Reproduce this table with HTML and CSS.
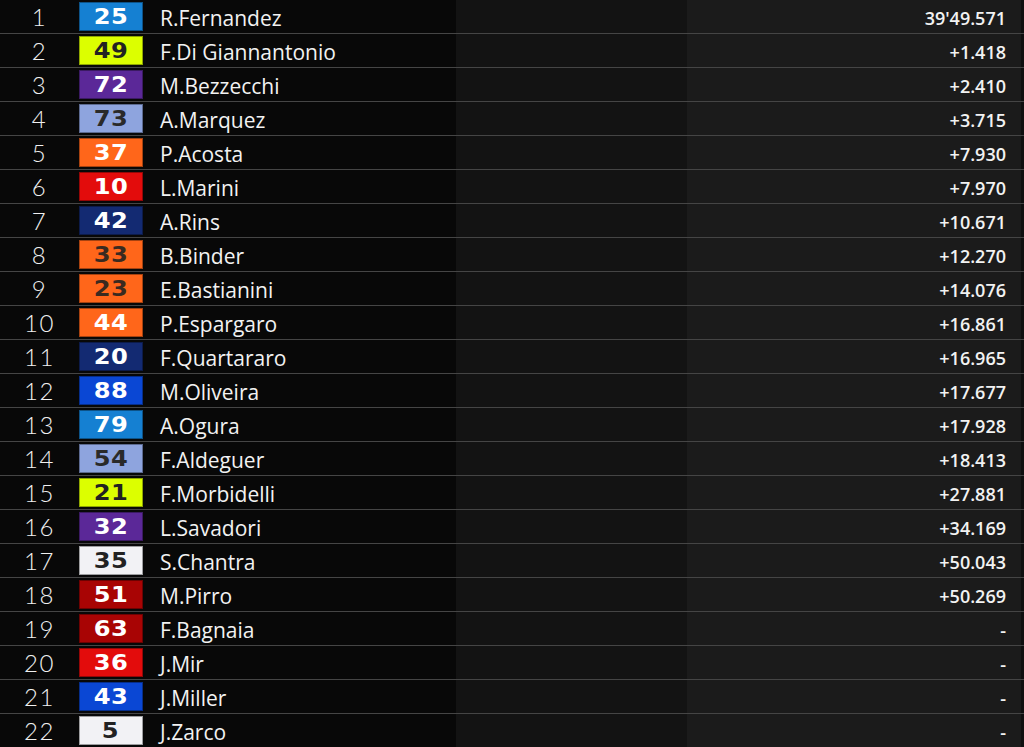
FILE: index.html
```html
<!DOCTYPE html>
<html>
<head>
<meta charset="utf-8">
<link rel="stylesheet" href="styles.css">
</head>
<body>
<div class="table">
  <div class="row"><span class="pos">1</span><span class="num c-trk"><b>25</b></span><span class="name">R.Fernandez</span><span class="time">39'49.571</span></div>
  <div class="row"><span class="pos">2</span><span class="num c-lime"><b>49</b></span><span class="name">F.Di Giannantonio</span><span class="time">+1.418</span></div>
  <div class="row"><span class="pos">3</span><span class="num c-purple"><b>72</b></span><span class="name">M.Bezzecchi</span><span class="time">+2.410</span></div>
  <div class="row"><span class="pos">4</span><span class="num c-light"><b>73</b></span><span class="name">A.Marquez</span><span class="time">+3.715</span></div>
  <div class="row"><span class="pos">5</span><span class="num c-orange"><b>37</b></span><span class="name">P.Acosta</span><span class="time">+7.930</span></div>
  <div class="row"><span class="pos">6</span><span class="num c-red"><b>10</b></span><span class="name">L.Marini</span><span class="time">+7.970</span></div>
  <div class="row"><span class="pos">7</span><span class="num c-navy"><b>42</b></span><span class="name">A.Rins</span><span class="time">+10.671</span></div>
  <div class="row"><span class="pos">8</span><span class="num c-orange dark"><b>33</b></span><span class="name">B.Binder</span><span class="time">+12.270</span></div>
  <div class="row"><span class="pos">9</span><span class="num c-orange dark"><b>23</b></span><span class="name">E.Bastianini</span><span class="time">+14.076</span></div>
  <div class="row"><span class="pos">10</span><span class="num c-orange"><b>44</b></span><span class="name">P.Espargaro</span><span class="time">+16.861</span></div>
  <div class="row"><span class="pos">11</span><span class="num c-navy"><b>20</b></span><span class="name">F.Quartararo</span><span class="time">+16.965</span></div>
  <div class="row"><span class="pos">12</span><span class="num c-blue"><b>88</b></span><span class="name">M.Oliveira</span><span class="time">+17.677</span></div>
  <div class="row"><span class="pos">13</span><span class="num c-trk"><b>79</b></span><span class="name">A.Ogura</span><span class="time">+17.928</span></div>
  <div class="row"><span class="pos">14</span><span class="num c-light"><b>54</b></span><span class="name">F.Aldeguer</span><span class="time">+18.413</span></div>
  <div class="row"><span class="pos">15</span><span class="num c-lime"><b>21</b></span><span class="name">F.Morbidelli</span><span class="time">+27.881</span></div>
  <div class="row"><span class="pos">16</span><span class="num c-purple"><b>32</b></span><span class="name">L.Savadori</span><span class="time">+34.169</span></div>
  <div class="row"><span class="pos">17</span><span class="num c-white"><b>35</b></span><span class="name">S.Chantra</span><span class="time">+50.043</span></div>
  <div class="row"><span class="pos">18</span><span class="num c-dred"><b>51</b></span><span class="name">M.Pirro</span><span class="time">+50.269</span></div>
  <div class="row"><span class="pos">19</span><span class="num c-dred"><b>63</b></span><span class="name">F.Bagnaia</span><span class="time">-</span></div>
  <div class="row"><span class="pos">20</span><span class="num c-red"><b>36</b></span><span class="name">J.Mir</span><span class="time">-</span></div>
  <div class="row"><span class="pos">21</span><span class="num c-blue"><b>43</b></span><span class="name">J.Miller</span><span class="time">-</span></div>
  <div class="row"><span class="pos">22</span><span class="num c-white"><b>5</b></span><span class="name">J.Zarco</span><span class="time">-</span></div>
</div>
</body>
</html>
```
FILE: styles.css
```css
html, body {
  margin: 0;
  padding: 0;
}
body {
  width: 1024px;
  height: 747px;
  overflow: hidden;
  background: linear-gradient(to right,
    #080808 0, #080808 456px,
    #131313 456px, #131313 687px,
    #1b1b1b 687px, #1b1b1b 1021px,
    #101010 1021px);
  color: #f2f2f2;
  font-family: "Open Sans", "Liberation Sans", sans-serif;
}
.table {
  display: flex;
  flex-direction: column;
}
.row {
  display: grid;
  grid-template-columns: 79px 64px 1fr auto;
  align-items: center;
  height: 33px;
  border-bottom: 1px solid #454545;
}
.pos {
  text-align: center;
  font-family: "Lato", sans-serif;
  font-weight: 300;
  font-size: 24px;
  letter-spacing: 1.5px;
  color: #f0f0f0;
  line-height: 1;
  padding-top: 1px;
}
.num {
  align-self: start;
  margin-top: 2px;
  height: 29px;
  display: flex;
  align-items: center;
  justify-content: center;
  color: #ffffff;
  box-sizing: border-box;
  border: 1px solid rgba(0, 0, 0, 0.35);
}
.num b {
  display: inline-block;
  font-family: "DejaVu Sans", sans-serif;
  font-weight: 700;
  font-size: 21px;
  line-height: 1;
  letter-spacing: 0.5px;
  padding-top: 2px;
  transform: scaleX(1.15);
}
.name {
  padding-left: 17px;
  font-size: 21px;
  color: #f2f2f2;
  padding-top: 2px;
}
.time {
  padding-right: 18px;
  font-size: 18px;
  font-weight: 600;
  text-align: right;
  color: #f2f2f2;
  padding-top: 2px;
}
.c-trk { background: #1580d2; }
.c-lime { background: #dcff00; color: #222; }
.c-purple { background: #5b2898; }
.c-light { background: #8ea4de; color: #2a2a2a; }
.c-orange { background: #ff661a; }
.c-orange.dark { color: #3a2a20; }
.c-red { background: #e30c0c; }
.c-navy { background: #132a72; }
.c-blue { background: #0a47d4; }
.c-white { background: #f2f2f5; color: #222; }
.c-dred { background: #a80404; }
```
